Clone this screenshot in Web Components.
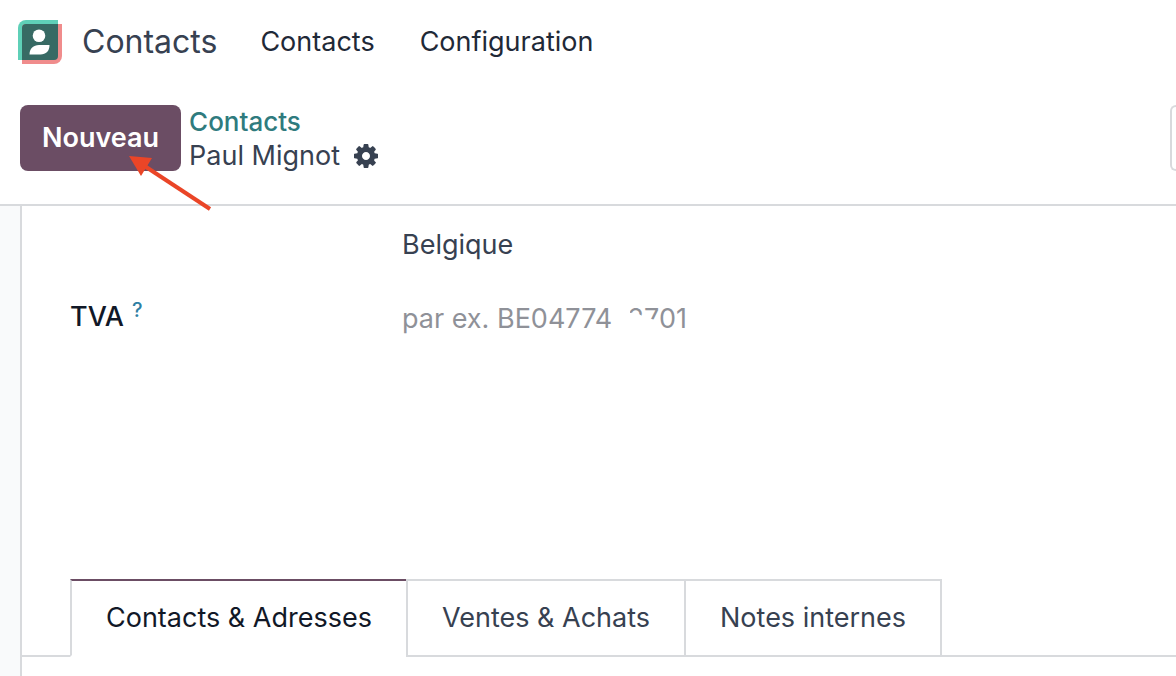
<!DOCTYPE html>
<html lang="fr">
<head>
<meta charset="utf-8">
<meta name="viewport" content="width=device-width, initial-scale=1">
<title>Contacts</title>
<style>
    body {
        margin: 0;
        min-height: 100vh;
        display: flex;
        flex-direction: column;
        background: #fff;
        color: #374151;
        font-family: Inter, "Liberation Sans", sans-serif;
        font-size: 27px;
        line-height: 34px;
        --border: #d8dadd;
        --primary: #6b4d64;
        --link: #2f7b7e;
        --strong: #111827;
    }
</style>
</head>
<body>

<app-navbar app="Contacts">
    <nav-link>Contacts</nav-link>
    <nav-link>Configuration</nav-link>
</app-navbar>

<control-panel action="Nouveau" parent="Contacts">
    Paul Mignot
</control-panel>

<form-sheet>
    <form-field name="country" label="" hint="Pays" value="Belgique"></form-field>
    <form-field name="vat" label="TVA" help placeholder="par ex. BE0477472701">
        <smudge-mark></smudge-mark>
    </form-field>
    <note-book slot="tabs">
        <note-tab active>Contacts &amp; Adresses</note-tab>
        <note-tab>Ventes &amp; Achats</note-tab>
        <note-tab>Notes internes</note-tab>
    </note-book>
</form-sheet>

<script>
(function(){

function makeTemplate(html) {
    var template = document.createElement('template');
    template.innerHTML = html;
    return template;
}

class BaseElement extends HTMLElement {
    constructor() {
        super();
        this.attachShadow({mode:'open'});
        this.shadowRoot.appendChild(this.constructor.template.content.cloneNode(true));
    }

    find(selector) {
        return this.shadowRoot.querySelector(selector);
    }
}

// top bar: app icon, app name, menu links
class AppNavbar extends BaseElement {
    connectedCallback() {
        this.find('.brand').textContent = this.getAttribute('app');
    }
}
AppNavbar.template = makeTemplate(/*html*/`
<style>
    :host {
        display: block;
    }
    nav {
        display: flex;
        align-items: center;
        height: 84px;
        padding-left: 18px;
    }
    svg {
        display: block;
        width: 44px;
        height: 44px;
        margin-right: 20px;
    }
    .brand {
        margin-right: 43px;
        color: #374151;
        font-size: 32px;
        line-height: 40px;
        text-decoration: none;
    }
    .menu {
        display: flex;
        gap: 45px;
    }
</style>
<nav>
    <svg viewBox="0 0 44 44" aria-hidden="true">
        <path fill="#5fd0b8" d="M8 0H40V40H0V8A8 8 0 0 1 8 0Z"/>
        <path fill="#f08c8c" d="M8 4H44V36A8 8 0 0 1 36 44H4V8A4 4 0 0 1 8 4Z"/>
        <path fill="#376a64" d="M8 4H40V36A4 4 0 0 1 36 40H4V8A4 4 0 0 1 8 4Z"/>
        <circle cx="21" cy="15.700" r="6.300" fill="#fff"/>
        <path fill="#fff" d="M11.500 34.500C11.500 28.500 15.500 25 21 25H31.500C31.500 31 28 34.500 22.500 34.500Z"/>
    </svg>
    <a class="brand" href="#"></a>
    <div class="menu"><slot></slot></div>
</nav>
`);
customElements.define('app-navbar', AppNavbar);

class NavLink extends BaseElement {}
NavLink.template = makeTemplate(/*html*/`
<style>
    :host {
        display: block;
    }
    a {
        color: #1f2937;
        text-decoration: none;
    }
</style>
<a href="#"><slot></slot></a>
`);
customElements.define('nav-link', NavLink);

// create button, breadcrumb and the start of the search box
class ControlPanel extends BaseElement {
    connectedCallback() {
        this.find('.create').textContent = this.getAttribute('action');
        this.find('.parent').textContent = this.getAttribute('parent');
    }
}
ControlPanel.template = makeTemplate(/*html*/`
<style>
    :host {
        display: flex;
        align-items: flex-start;
        gap: 8px;
        padding: 21px 0 31px 20px;
        border-bottom: 2px solid var(--border);
    }
    .action {
        position: relative;
    }
    .create {
        display: block;
        height: 66px;
        padding: 0 22px;
        border: 0;
        border-radius: 8px;
        background: var(--primary);
        color: #fff;
        font: inherit;
        font-weight: 600;
        cursor: pointer;
    }
    .arrow {
        position: absolute;
        left: 109px;
        top: 49px;
        width: 84px;
        height: 60px;
        pointer-events: none;
    }
    .trail {
        display: flex;
        flex-direction: column;
    }
    .parent {
        color: var(--link);
        font-size: 26px;
        font-weight: 500;
        text-decoration: none;
    }
    .current {
        display: flex;
        align-items: center;
        gap: 14px;
    }
    .gear {
        padding: 0;
        border: 0;
        background: none;
        color: inherit;
    }
    .gear svg {
        display: block;
        width: 24px;
        height: 24px;
    }
    .search {
        box-sizing: border-box;
        width: 6px;
        height: 66px;
        margin: 0 0 0 auto;
        padding: 0;
        border: 2px solid var(--border);
        border-right: 0;
        border-radius: 8px 0 0 8px;
        font: inherit;
    }
</style>
<div class="action">
    <button class="create" type="button"></button>
    <svg class="arrow" viewBox="0 0 84 60" aria-hidden="true">
        <path d="M14 11L81 55" stroke="#ea4527" stroke-width="4" fill="none"/>
        <path d="M0 2L23 4L12 22Z" fill="#ea4527"/>
    </svg>
</div>
<div class="trail">
    <a class="parent" href="#"></a>
    <div class="current">
        <span><slot></slot></span>
        <button class="gear" type="button" aria-label="Actions">
            <svg viewBox="0 128 1536 1536" aria-hidden="true">
                <path fill="currentColor" d="M1024 896q0-106-75-181t-181-75-181 75-75 181 75 181 181 75 181-75 75-181zm512-109v222q0 12-8 23t-20 13l-185 28q-19 54-39 91 35 50 107 138 10 12 10 25t-9 23q-27 37-99 108t-94 71q-12 0-26-9l-138-108q-44 23-91 38-16 136-29 186-7 28-36 28h-222q-14 0-24.500-8.500t-11.500-21.500l-28-184q-49-16-90-37l-141 107q-10 9-25 9-14 0-25-11-126-114-165-168-7-10-7-23 0-12 8-23 15-21 51-66.500t54-70.500q-27-50-41-99l-183-27q-13-2-21-12.500t-8-23.500v-222q0-12 8-23t19-13l186-28q14-46 39-92-40-57-107-138-10-12-10-24 0-10 9-23 26-36 98.500-107.500t94.500-71.500q13 0 26 10l138 107q44-23 91-38 16-136 29-186 7-28 36-28h222q14 0 24.500 8.500t11.500 21.500l28 184q49 16 90 37l142-107q9-9 24-9 13 0 25 10 129 119 165 170 7 8 7 22 0 12-8 23-15 21-51 66.500t-54 70.500q26 50 41 98l183 28q13 2 21 12.500t8 23.500z"/>
            </svg>
        </button>
    </div>
</div>
<input class="search" type="text" aria-label="Rechercher">
`);
customElements.define('control-panel', ControlPanel);

class FormSheet extends BaseElement {}
FormSheet.template = makeTemplate(/*html*/`
<style>
    :host {
        display: flex;
        flex: 1;
        padding-left: 20px;
        background: #f9fafb;
    }
    .sheet {
        display: flex;
        flex: 1;
        flex-direction: column;
        border-left: 2px solid var(--border);
        background: #fff;
    }
    form {
        display: flex;
        flex-direction: column;
        gap: 40px;
        min-height: 352px;
        padding: 22px 48px 0;
        box-sizing: border-box;
        margin-bottom: 21px;
    }
</style>
<div class="sheet">
    <form><slot></slot></form>
    <slot name="tabs"></slot>
</div>
`);
customElements.define('form-sheet', FormSheet);

class FormField extends BaseElement {
    connectedCallback() {
        var input = this.find('input');
        input.name = this.getAttribute('name');
        input.value = this.getAttribute('value') || '';
        input.placeholder = this.getAttribute('placeholder') || '';
        this.find('.text').textContent = this.getAttribute('label');
        if (this.hasAttribute('hint')) {
            input.setAttribute('aria-label', this.getAttribute('hint'));
        }
        if (!this.hasAttribute('help')) {
            this.find('sup').remove();
        }
    }
}
FormField.template = makeTemplate(/*html*/`
<style>
    :host {
        display: grid;
        grid-template-columns: 332px 1fr;
        align-items: start;
    }
    label {
        display: flex;
        align-items: flex-start;
        gap: 8px;
        color: var(--strong);
        font-weight: 500;
        line-height: 30px;
    }
    sup {
        color: #2f7fa3;
        font-size: 20px;
        line-height: 16px;
    }
    .control {
        position: relative;
    }
    input {
        display: block;
        box-sizing: border-box;
        width: 100%;
        height: 34px;
        padding: 0;
        border: 0;
        outline: 0;
        background: none;
        color: inherit;
        font: inherit;
    }
    input::placeholder {
        color: #8f9198;
        opacity: 1;
    }
</style>
<label for="field"><span class="text"></span><sup>?</sup></label>
<div class="control">
    <input id="field" type="text">
    <slot></slot>
</div>
`);
customElements.define('form-field', FormField);

// white patch over a part of the number
class SmudgeMark extends BaseElement {}
SmudgeMark.template = makeTemplate(/*html*/`
<style>
    :host {
        position: absolute;
        left: 208px;
        top: 0;
        pointer-events: none;
    }
    svg {
        display: block;
        width: 48px;
        height: 34px;
    }
</style>
<svg viewBox="0 0 48 34" aria-hidden="true">
    <path fill="#fff" d="M2 0H20V11C26 9 30 13 36 16C40 17 43 17 46 18L40 34H2Z"/>
</svg>
`);
customElements.define('smudge-mark', SmudgeMark);

// tab row; the bottom line continues on both sides of the tabs
class NoteBook extends BaseElement {}
NoteBook.template = makeTemplate(/*html*/`
<style>
    :host {
        display: flex;
    }
    .edge {
        width: 48px;
        border-bottom: 2px solid var(--border);
    }
    .edge.end {
        flex: 1;
    }
    .tabs {
        display: flex;
    }
</style>
<div class="edge"></div>
<div class="tabs" role="tablist"><slot></slot></div>
<div class="edge end"></div>
`);
customElements.define('note-book', NoteBook);

class NoteTab extends BaseElement {
    connectedCallback() {
        this.find('button').setAttribute('aria-selected', this.hasAttribute('active'));
    }
}
NoteTab.template = makeTemplate(/*html*/`
<style>
    :host {
        display: block;
    }
    :host(:not(:first-child)) {
        margin-left: -2px;
    }
    button {
        display: block;
        height: 78px;
        padding: 0 34px;
        border: 2px solid var(--border);
        background: #fff;
        color: #374151;
        font: inherit;
        white-space: nowrap;
        cursor: pointer;
    }
    :host([active]) button {
        border-top-color: var(--primary);
        border-bottom-color: #fff;
        color: var(--strong);
    }
</style>
<button type="button" role="tab"><slot></slot></button>
`);
customElements.define('note-tab', NoteTab);

})();
</script>
</body>
</html>
